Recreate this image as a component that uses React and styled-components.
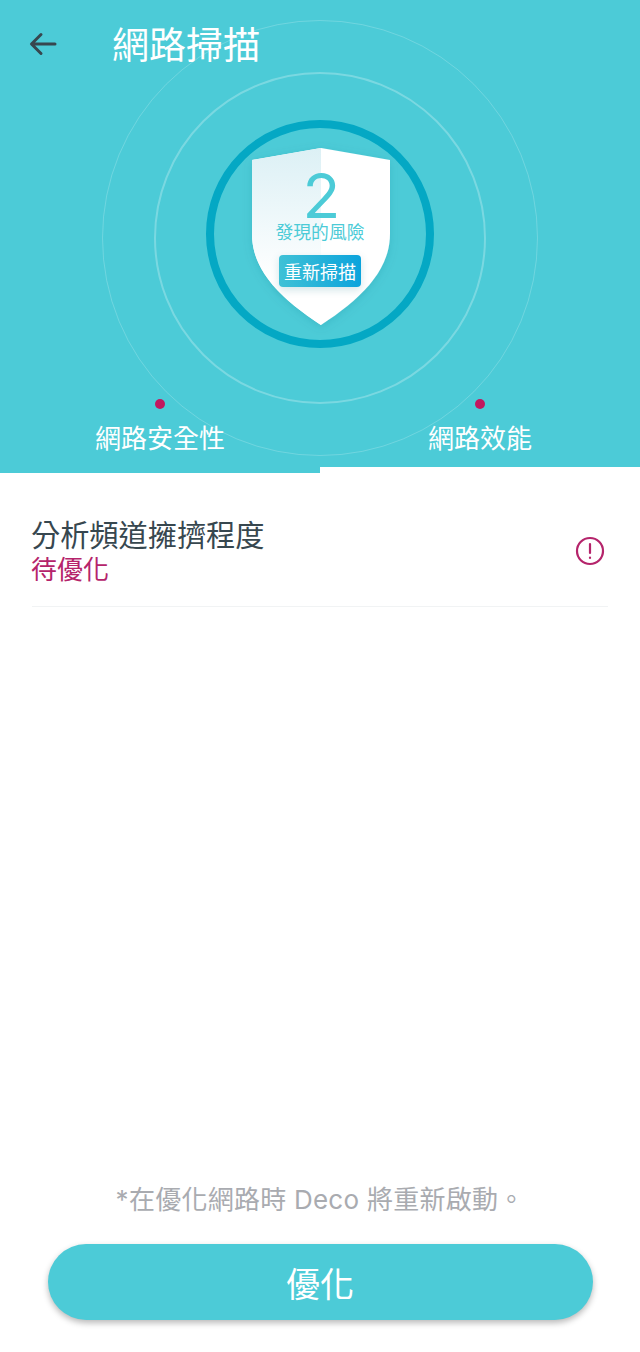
import React from "react";
import styled, { createGlobalStyle } from "styled-components";

const Global = createGlobalStyle`
  html, body { margin: 0; padding: 0; background: #fff; }
  * { box-sizing: border-box; }
  body { font-family: "Noto Sans CJK TC", "Noto Sans", sans-serif; }
`;

const Page = styled.div`
  width: 640px;
  height: 1352px;
  display: flex;
  flex-direction: column;
  background: #fff;
  overflow: hidden;
`;

const Header = styled.header`
  position: relative;
  height: 473px;
  background: #4ccbd7;
  flex: none;
  display: flex;
  flex-direction: column;
  overflow: hidden;
`;

const Ring = styled.div`
  position: absolute;
  left: ${p => 320 - p.$r}px;
  top: ${p => 238 - p.$r}px;
  width: ${p => p.$r * 2}px;
  height: ${p => p.$r * 2}px;
  border-radius: 50%;
  border: ${p => p.$w}px solid rgba(255, 255, 255, ${p => p.$a});
`;

const TopBar = styled.div`
  position: relative;
  height: 88px;
  display: flex;
  align-items: center;
  padding-left: 28px;
  flex: none;
`;

const BackButton = styled.div`
  width: 84px;
  height: 30px;
  display: flex;
  align-items: center;
`;

const Title = styled.h1`
  margin: 0 0 2px;
  font-size: 37px;
  font-weight: 400;
  line-height: 48px;
  color: #fff;
`;

const Hero = styled.div`
  position: relative;
  flex: none;
  height: 259px;
  padding-top: 32px;
  display: flex;
  justify-content: center;
`;

const Gauge = styled.div`
  position: relative;
  width: 228px;
  height: 228px;
  border-radius: 50%;
  border: 8px solid #04a8c4;
  display: flex;
  justify-content: center;
  padding-top: 20px;
`;

const Shield = styled.div`
  position: relative;
  width: 140px;
  height: 178px;
  display: flex;
  flex-direction: column;
  align-items: center;
`;

const ShieldArt = styled.svg`
  position: absolute;
  left: -9px;
  top: -4px;
  overflow: visible;
`;

const Count = styled.div`
  position: relative;
  margin: 17px 0 0 3px;
  height: 54px;
  font-family: "Inter", "Noto Sans", sans-serif;
  font-size: 62px;
  font-weight: 400;
  line-height: 62px;
  color: #4ccbd7;
`;

const CountLabel = styled.div`
  position: relative;
  font-size: 17.8px;
  line-height: 24px;
  color: #4ccbd7;
  white-space: nowrap;
`;

const Rescan = styled.div`
  position: relative;
  margin-top: 12px;
  width: 82px;
  height: 32px;
  border-radius: 4px;
  background: linear-gradient(90deg, #3fc1d6, #0ba3dc);
  box-shadow: 0 3px 8px rgba(0, 110, 130, 0.18);
  color: #fff;
  font-size: 18px;
  line-height: 32px;
  text-align: center;
  white-space: nowrap;
`;

const Tabs = styled.div`
  position: relative;
  flex: 1;
  display: grid;
  grid-template-columns: 1fr 1fr;
`;

const Tab = styled.div`
  display: flex;
  flex-direction: column;
  align-items: center;
  padding-top: 52px;
`;

const Dot = styled.span`
  width: 10px;
  height: 10px;
  border-radius: 50%;
  background: #c2185f;
`;

const TabLabel = styled.div`
  margin-top: 9px;
  font-size: 26px;
  font-weight: 400;
  line-height: 38px;
  color: #fff;
`;

const ActiveBar = styled.div`
  position: absolute;
  left: 320px;
  right: 0;
  bottom: 0;
  height: 6px;
  background: #fff;
`;

const List = styled.main`
  flex: 1;
  padding: 28px 32px 0;
`;

const Row = styled.div`
  display: flex;
  align-items: center;
  justify-content: space-between;
  height: 106px;
  border-bottom: 1px solid #f1f3f4;
`;

const RowText = styled.div`
  display: flex;
  flex-direction: column;
  padding-bottom: 10px;
  margin-left: -1px;
`;

const RowTitle = styled.div`
  font-size: 29.2px;
  line-height: 38px;
  color: #37474f;
`;

const RowStatus = styled.div`
  font-size: 26px;
  line-height: 32px;
  color: #b5246b;
`;

const AlertIcon = styled.svg`
  margin-right: 3px;
  margin-bottom: 6px;
`;

const Footer = styled.footer`
  flex: none;
  display: flex;
  flex-direction: column;
  align-items: center;
  padding-bottom: 32px;
`;

const Note = styled.div`
  font-family: "Inter", "Noto Sans CJK TC", sans-serif;
  font-size: 26px;
  letter-spacing: 0.25px;
  line-height: 36px;
  color: #a9abb0;
  white-space: nowrap;
`;

const OptimizeButton = styled.button`
  margin-top: 26px;
  width: 545px;
  height: 76px;
  border: 0;
  border-radius: 38px;
  background: #4ccbd7;
  color: #fff;
  font-family: inherit;
  font-size: 34px;
  box-shadow: 0 3px 6px rgba(0, 0, 0, 0.28);
`;

export default function App() {
  return (
    <Page>
      <Global />
      <Header>
        <Ring $r={218} $w={1} $a={0.2} />
        <Ring $r={166} $w={2} $a={0.26} />
        <TopBar>
          <BackButton>
            <svg width="32" height="30" viewBox="0 0 32 30" fill="none" stroke="#37474f" strokeWidth="3" strokeLinecap="round" strokeLinejoin="round">
              <path d="M4 15H27M13 5.5L3.5 15L13 24.5" />
            </svg>
          </BackButton>
          <Title>網路掃描</Title>
        </TopBar>
        <Hero>
          <Gauge>
            <Shield>
              <ShieldArt width="160" height="190" viewBox="0 0 160 190">
                <defs>
                  <linearGradient id="shieldLeft" x1="0" y1="0" x2="0" y2="1">
                    <stop offset="0" stopColor="#dcf0f5" />
                    <stop offset="0.75" stopColor="#ffffff" />
                  </linearGradient>
                  <filter id="soft" x="-20%" y="-20%" width="140%" height="140%">
                    <feDropShadow dx="0" dy="2" stdDeviation="5" floodColor="#00707f" floodOpacity="0.18" />
                  </filter>
                </defs>
                <path filter="url(#soft)" fill="#fff" d="M80 4L149 16V90C149 128 118 156 80 181C42 156 11 128 11 90V16Z" />
                <path fill="url(#shieldLeft)" d="M80 4L11 16V90C11 128 42 156 80 181Z" />
              </ShieldArt>
              <Count>2</Count>
              <CountLabel>發現的風險</CountLabel>
              <Rescan>重新掃描</Rescan>
            </Shield>
          </Gauge>
        </Hero>
        <Tabs>
          <Tab>
            <Dot />
            <TabLabel>網路安全性</TabLabel>
          </Tab>
          <Tab>
            <Dot />
            <TabLabel>網路效能</TabLabel>
          </Tab>
          <ActiveBar />
        </Tabs>
      </Header>
      <List>
        <Row>
          <RowText>
            <RowTitle>分析頻道擁擠程度</RowTitle>
            <RowStatus>待優化</RowStatus>
          </RowText>
          <AlertIcon width="30" height="30" viewBox="0 0 30 30" fill="none" stroke="#b5246b" strokeWidth="2.2" strokeLinecap="round">
            <circle cx="15" cy="15" r="13" />
            <path d="M15 8V17" />
            <path d="M15 21.5V22" />
          </AlertIcon>
        </Row>
      </List>
      <Footer>
        <Note>*在優化網路時 Deco 將重新啟動。</Note>
        <OptimizeButton>優化</OptimizeButton>
      </Footer>
    </Page>
  );
}
